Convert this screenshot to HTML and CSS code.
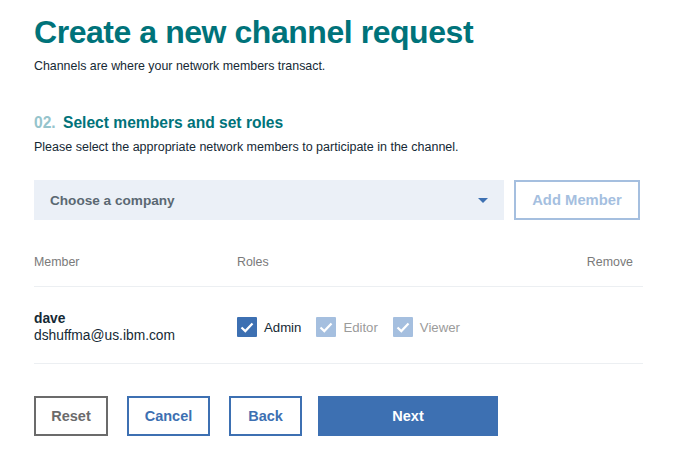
FILE: index.html
```html
<!DOCTYPE html>
<html>
<head>
<meta charset="utf-8">
<link rel="stylesheet" href="styles.css">
</head>
<body>
<main class="page">
  <h1 class="title">Create a new channel request</h1>
  <p class="subtitle">Channels are where your network members transact.</p>

  <h2 class="step"><span class="step-num">02.</span> Select members and set roles</h2>
  <p class="step-desc">Please select the appropriate network members to participate in the channel.</p>

  <div class="picker">
    <div class="select">
      <span class="select-label">Choose a company</span>
      <svg class="caret" width="10" height="5" viewBox="0 0 10 5"><path d="M0 0h10L5 5z" fill="#3d70b2"/></svg>
    </div>
    <button class="btn btn-add">Add Member</button>
  </div>

  <div class="table">
    <div class="thead">
      <span class="col-member">Member</span>
      <span class="col-roles">Roles</span>
      <span class="col-remove">Remove</span>
    </div>
    <div class="row">
      <div class="col-member">
        <div class="name">dave</div>
        <div class="email">dshuffma@us.ibm.com</div>
      </div>
      <div class="col-roles roles">
        <label class="role"><span class="box box-on"><svg width="14" height="11" viewBox="0 0 14 11"><path d="M1.5 5.5l3.8 3.6L12.5 1.5" fill="none" stroke="#fff" stroke-width="2.2"/></svg></span><span class="role-label">Admin</span></label>
        <label class="role role-dis"><span class="box box-dis"><svg width="14" height="11" viewBox="0 0 14 11"><path d="M1.5 5.5l3.8 3.6L12.5 1.5" fill="none" stroke="#fff" stroke-width="2.2"/></svg></span><span class="role-label">Editor</span></label>
        <label class="role role-dis"><span class="box box-dis"><svg width="14" height="11" viewBox="0 0 14 11"><path d="M1.5 5.5l3.8 3.6L12.5 1.5" fill="none" stroke="#fff" stroke-width="2.2"/></svg></span><span class="role-label">Viewer</span></label>
      </div>
    </div>
  </div>

  <div class="actions">
    <button class="btn btn-reset">Reset</button>
    <button class="btn btn-outline btn-cancel">Cancel</button>
    <button class="btn btn-outline btn-back">Back</button>
    <button class="btn btn-primary">Next</button>
  </div>
</main>
</body>
</html>
```

FILE: styles.css
```css
* { box-sizing: border-box; }
html, body { margin: 0; padding: 0; background: #fff; }
body { font-family: "Liberation Sans", Arial, sans-serif; color: #152935; }
.page { padding: 13px 0 0 34px; width: 690px; }

.title {
  margin: 0;
  font-size: 32px;
  line-height: 38px;
  font-weight: 700;
  color: #00737a;
  letter-spacing: -0.45px;
}
.subtitle {
  margin: 8px 0 0;
  font-size: 12.4px;
  line-height: 14px;
  color: #152935;
}
.step {
  margin: 41px 0 0;
  font-size: 15.6px;
  line-height: 18px;
  font-weight: 700;
  color: #00737a;
}
.step-num { color: #95c4cc; margin-right: 3px; }
.step-desc {
  margin: 8px 0 0;
  font-size: 12.5px;
  line-height: 14px;
  color: #152935;
}

.picker {
  display: flex;
  gap: 10px;
  margin-top: 26px;
  height: 40px;
}
.select {
  width: 470px;
  background: #ebf0f7;
  display: flex;
  align-items: center;
  justify-content: space-between;
  padding: 0 16px 0 16px;
}
.select-label { font-size: 13.6px; font-weight: 700; color: #5a6872; }
.btn {
  font-family: "Liberation Sans", Arial, sans-serif;
  font-weight: 700;
  font-size: 14.5px;
  background: #fff;
  height: 40px;
  padding: 0;
  cursor: pointer;
}
.btn-add {
  width: 126px;
  border: 2px solid #a5bfdf;
  color: #a5bfdf;
  font-size: 14.8px;
}

.table { width: 609px; margin-top: 35px; }
.thead {
  display: flex;
  font-size: 12.4px;
  line-height: 14px;
  color: #7a7a7a;
  height: 32px;
  border-bottom: 1px solid #eceff2;
}
.col-member { width: 203px; }
.col-roles { flex: 1; }
.col-remove { text-align: right; padding-right: 10px; width: 80px; }
.row {
  display: flex;
  align-items: center;
  height: 77px;
  padding-top: 4px;
  border-bottom: 1px solid #eceff2;
}
.name { font-size: 13.8px; font-weight: 700; color: #152935; line-height: 17px; }
.email { font-size: 13.8px; color: #152935; line-height: 17px; }
.roles { display: flex; gap: 15px; }
.role { display: flex; align-items: center; gap: 7px; font-size: 13.2px; }
.box {
  width: 20px; height: 20px;
  display: flex; align-items: center; justify-content: center;
  border-radius: 1px;
}
.box-on { background: #3d70b2; }
.box-dis { background: #a5bfdf; }
.role-label { color: #152935; }
.role-dis .role-label { color: #9b9b9b; }

.actions {
  display: flex;
  margin-top: 32px;
  gap: 19px;
}
.btn-reset { width: 74px; border: 2px solid #6b6b6b; color: #6b6b6b; }
.btn-outline { border: 2px solid #3d70b2; color: #3d70b2; }
.btn-cancel { width: 83px; }
.btn-back { width: 73px; }
.btn-primary { width: 180px; border: none; background: #3d70b2; color: #fff; margin-left: -3px; }
```
